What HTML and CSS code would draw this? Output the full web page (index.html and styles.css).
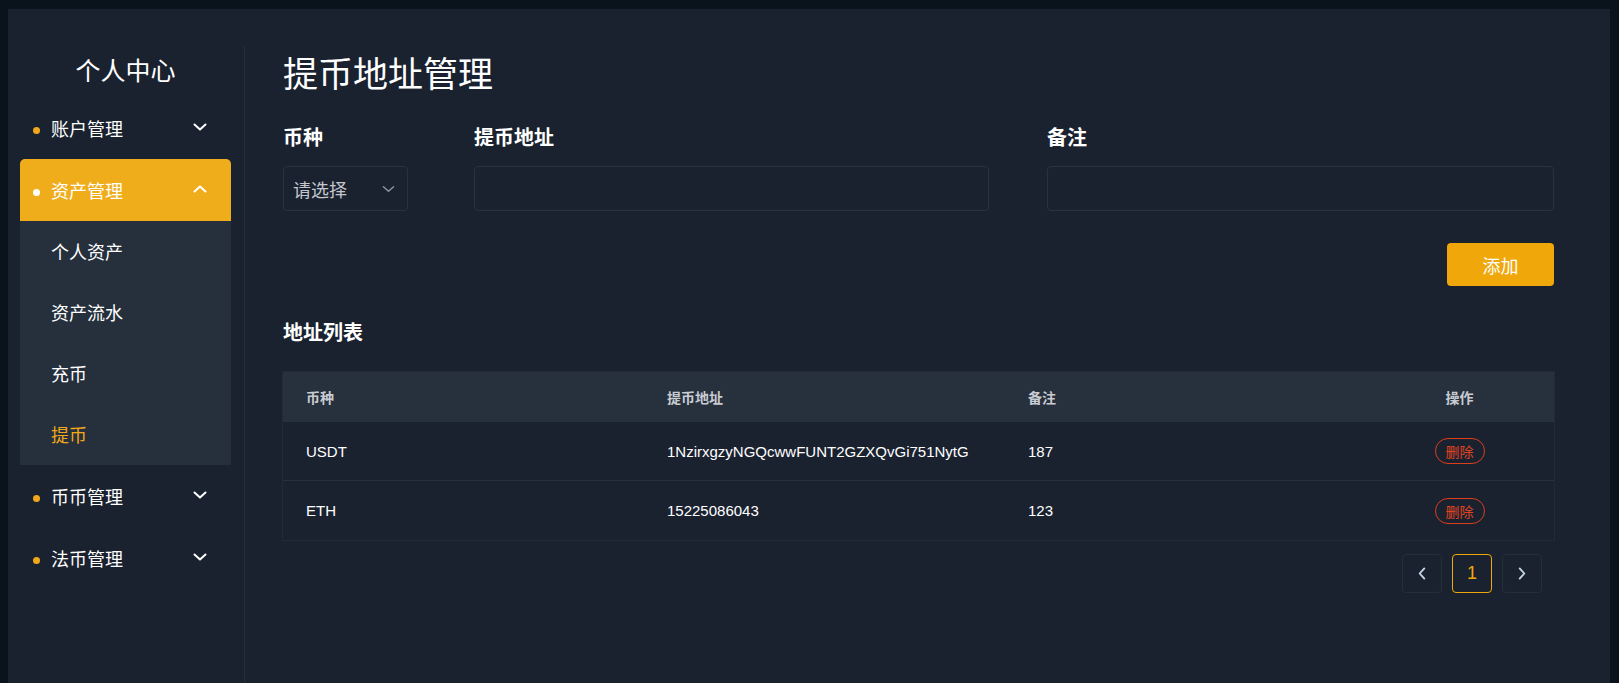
FILE: index.html
```html
<!DOCTYPE html>
<html lang="zh-CN">
<head>
<meta charset="utf-8">
<title>提币地址管理</title>
<link rel="stylesheet" href="styles.css">
</head>
<body>
<div class="panel">
  <aside class="sidebar">
    <div class="side-title">个人中心</div>
    <div class="menu">
      <div class="menu-head">
        <span class="dot"></span><span class="menu-text">账户管理</span>
        <svg class="chev" viewBox="0 0 14 8" width="14" height="8"><path d="M1.5 1.5 L7 6.5 L12.5 1.5" fill="none" stroke="currentColor" stroke-width="2" stroke-linecap="round" stroke-linejoin="round"/></svg>
      </div>
      <div class="menu-head active">
        <span class="dot"></span><span class="menu-text">资产管理</span>
        <svg class="chev" viewBox="0 0 14 8" width="14" height="8"><path d="M1.5 6.5 L7 1.5 L12.5 6.5" fill="none" stroke="currentColor" stroke-width="2" stroke-linecap="round" stroke-linejoin="round"/></svg>
      </div>
      <div class="submenu">
        <div class="sub-item">个人资产</div>
        <div class="sub-item">资产流水</div>
        <div class="sub-item">充币</div>
        <div class="sub-item current">提币</div>
      </div>
      <div class="menu-head">
        <span class="dot"></span><span class="menu-text">币币管理</span>
        <svg class="chev" viewBox="0 0 14 8" width="14" height="8"><path d="M1.5 1.5 L7 6.5 L12.5 1.5" fill="none" stroke="currentColor" stroke-width="2" stroke-linecap="round" stroke-linejoin="round"/></svg>
      </div>
      <div class="menu-head">
        <span class="dot"></span><span class="menu-text">法币管理</span>
        <svg class="chev" viewBox="0 0 14 8" width="14" height="8"><path d="M1.5 1.5 L7 6.5 L12.5 1.5" fill="none" stroke="currentColor" stroke-width="2" stroke-linecap="round" stroke-linejoin="round"/></svg>
      </div>
    </div>
  </aside>

  <main class="main">
    <h1 class="page-title">提币地址管理</h1>

    <div class="form-row">
      <div class="field field-coin">
        <div class="label">币种</div>
        <div class="select">
          <span class="placeholder">请选择</span>
          <svg class="select-chev" viewBox="0 0 14 8" width="13" height="8"><path d="M1.5 1.5 L7 6.5 L12.5 1.5" fill="none" stroke="currentColor" stroke-width="1.6" stroke-linecap="round" stroke-linejoin="round"/></svg>
        </div>
      </div>
      <div class="field field-addr">
        <div class="label">提币地址</div>
        <div class="input"></div>
      </div>
      <div class="field field-note">
        <div class="label">备注</div>
        <div class="input"></div>
      </div>
    </div>

    <div class="actions">
      <button class="btn-add">添加</button>
    </div>

    <h2 class="section-title">地址列表</h2>

    <div class="table">
      <div class="tr thead">
        <div class="td c1">币种</div>
        <div class="td c2">提币地址</div>
        <div class="td c3">备注</div>
        <div class="td c4">操作</div>
      </div>
      <div class="tr">
        <div class="td c1">USDT</div>
        <div class="td c2">1NzirxgzyNGQcwwFUNT2GZXQvGi751NytG</div>
        <div class="td c3">187</div>
        <div class="td c4"><span class="btn-del">删除</span></div>
      </div>
      <div class="tr last">
        <div class="td c1">ETH</div>
        <div class="td c2">15225086043</div>
        <div class="td c3">123</div>
        <div class="td c4"><span class="btn-del">删除</span></div>
      </div>
    </div>

    <div class="pager">
      <span class="pg-btn">
        <svg viewBox="0 0 8 14" width="8" height="13"><path d="M6.5 1.5 L1.5 7 L6.5 12.5" fill="none" stroke="currentColor" stroke-width="2" stroke-linecap="round" stroke-linejoin="round"/></svg>
      </span>
      <span class="pg-btn pg-active">1</span>
      <span class="pg-btn">
        <svg viewBox="0 0 8 14" width="8" height="13"><path d="M1.5 1.5 L6.5 7 L1.5 12.5" fill="none" stroke="currentColor" stroke-width="2" stroke-linecap="round" stroke-linejoin="round"/></svg>
      </span>
    </div>
  </main>
</div>
</body>
</html>
```

FILE: styles.css
```css
* { box-sizing: border-box; }

html, body {
  margin: 0;
  height: 683px;
  overflow: hidden;
}

body {
  background: #0a121b;
  padding: 9px 9px 0 8px;
  font-family: "Noto Sans CJK SC", "Liberation Sans", sans-serif;
  color: #ffffff;
}

.panel {
  display: flex;
  background: #1a2230;
  height: 674px;
}

/* ---------- sidebar ---------- */
.sidebar {
  width: 237px;
  flex: none;
  margin-top: 37px;
  padding: 0 13px 0 12px;
  border-right: 1px solid #262e3a;
}

.side-title {
  height: 51px;
  padding-top: 6px;
  font-size: 25px;
  line-height: 34px;
  text-align: center;
  color: #ffffff;
}

.menu-head {
  display: flex;
  align-items: center;
  height: 62px;
  padding: 0 24px 0 13px;
  font-size: 18px;
  color: #ffffff;
  border-radius: 5px;
}

.menu-head .dot {
  width: 7px;
  height: 7px;
  border-radius: 50%;
  background: #f0a81a;
  margin-right: 11px;
  margin-top: 4px;
}

.menu-head .menu-text {
  flex: 1;
}

.menu-head .chev {
  color: #ffffff;
  margin-top: -3px;
}

.menu-head.active {
  background: #f0ad1b;
  border-radius: 5px 5px 0 0;
}

.menu-head.active .dot {
  background: #ffffff;
}

.submenu {
  background: #262f3c;
}

.sub-item {
  height: 61px;
  line-height: 61px;
  padding-left: 31px;
  font-size: 18px;
  color: #ffffff;
}

.sub-item.current {
  color: #f0a81a;
}

/* ---------- main ---------- */
.main {
  flex: 1;
  padding: 0 56px 0 38px;
  min-width: 0;
}

.page-title {
  margin: 0;
  padding-top: 38px;
  font-size: 35px;
  font-weight: 400;
  line-height: 50px;
  color: #ffffff;
}

.form-row {
  display: flex;
  margin-top: 26px;
}

.field-coin { width: 125px; margin-right: 66px; flex: none; }
.field-addr { width: 515px; margin-right: 58px; flex: none; }
.field-note { flex: 1; }

.label {
  font-size: 20px;
  font-weight: 700;
  line-height: 28px;
  height: 28px;
  color: #ffffff;
}

.select,
.input {
  margin-top: 15px;
  height: 45px;
  border: 1px solid #2a3240;
  border-radius: 4px;
  background: #1a2230;
}

.select {
  display: flex;
  align-items: center;
  justify-content: space-between;
  padding: 0 12px 0 9px;
}

.placeholder {
  font-size: 18px;
  color: #c3c7cd;
}

.select-chev {
  color: #8b93a0;
  margin-top: 1px;
}

.actions {
  display: flex;
  justify-content: flex-end;
  margin-top: 32px;
}

.btn-add {
  width: 107px;
  height: 43px;
  border: 0;
  border-radius: 4px;
  background: #f0a70a;
  color: #ffffff;
  font-family: "Noto Sans CJK SC", sans-serif;
  font-size: 18px;
  padding: 0;
}

.section-title {
  margin: 0;
  margin-top: 31px;
  font-size: 20px;
  font-weight: 700;
  line-height: 30px;
  color: #ffffff;
}

/* ---------- table ---------- */
.table {
  margin-top: 25px;
  box-shadow: 0 0 0 1px #212a36;
  font-family: "Liberation Sans", "Noto Sans CJK SC", sans-serif;
}

.tr {
  display: flex;
  align-items: center;
  height: 59px;
  border-bottom: 1px solid #28303c;
}

.tr.last { border-bottom: 0; }

.tr.thead {
  height: 50px;
  background: #27303d;
  border-bottom: 0;
}

.td {
  font-size: 15px;
  color: #ffffff;
  padding-left: 23px;
}

.thead .td {
  font-size: 14px;
  font-weight: 700;
  color: #c8ccd2;
}

.c1 { width: 361px; }
.c2 { width: 361px; }
.c3 { width: 360px; }
.c4 { flex: 1; padding-left: 0; text-align: center; }

.btn-del {
  display: inline-block;
  width: 50px;
  height: 26px;
  line-height: 24px;
  border: 1px solid #dc3d1c;
  border-radius: 13px;
  color: #e0441f;
  font-size: 14px;
  text-align: center;
  font-family: "Noto Sans CJK SC", sans-serif;
}

/* ---------- pager ---------- */
.pager {
  display: flex;
  justify-content: flex-end;
  gap: 10px;
  margin-top: 14px;
  padding-right: 12px;
}

.pg-btn {
  width: 40px;
  height: 39px;
  display: flex;
  align-items: center;
  justify-content: center;
  border: 1px solid #262e3a;
  border-radius: 4px;
  color: #c8d6e6;
  font-size: 18px;
}

.pg-active {
  border-color: #f0a70a;
  color: #f0a70a;
  font-family: "Liberation Sans", sans-serif;
}
```
